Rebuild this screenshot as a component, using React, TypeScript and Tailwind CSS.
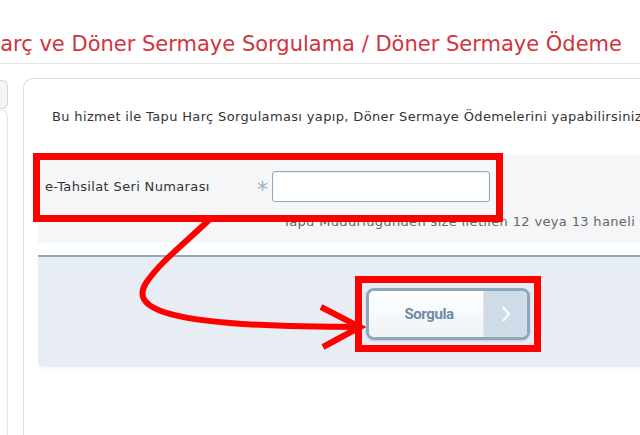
import React from "react";

const Annotations: React.FC = () => (
  <svg
    className="absolute inset-0 pointer-events-none"
    width={640}
    height={435}
    viewBox="0 0 640 435"
    fill="none"
  >
    <rect x={36.5} y={156.5} width={463} height={62} stroke="#ff0000" strokeWidth={7} />
    <rect x={358.5} y={279.5} width={179} height={69} stroke="#ff0000" strokeWidth={7} />
    <path
      d="M 210 219 C 185 243, 160 262, 146 283 C 130 308, 170 318, 230 323 C 280 327, 330 327, 360 327"
      stroke="#ff0000"
      strokeWidth={6}
      strokeLinecap="round"
    />
    <path d="M 321 307 L 360 327 L 323 347" stroke="#ff0000" strokeWidth={6} />
  </svg>
);

const App: React.FC = () => {
  return (
    <div className="relative w-[640px] h-[435px] overflow-hidden bg-white font-['DejaVu_Sans',sans-serif]">
      {/* Page title, cut off on the left */}
      <div className="h-[64px] border-b border-[#e6e6e6] flex justify-end items-start pr-[18px] pt-[31px] overflow-hidden">
        <h1 className="whitespace-nowrap text-[21px] leading-[26px] text-[#cf3440] shrink-0">
          Tapu Harç ve Döner Sermaye Sorgulama / Döner Sermaye Ödeme
        </h1>
      </div>

      <div className="flex mt-[14px]">
        {/* Left menu edge */}
        <div className="w-[8px] shrink-0 flex flex-col h-[357px]">
          <div className="h-[29px] mt-[2px] border border-l-0 border-[#d6d6d6] rounded-r-[6px] bg-[#f4f4f4]" />
          <div className="flex-1 mt-[1px] border-r border-t border-[#dfe5ea] rounded-tr-[6px]" />
        </div>

        {/* Main panel */}
        <div className="ml-[15px] flex-1 min-w-0 h-[357px] border-l border-t border-[#d3dde6] rounded-tl-[10px] overflow-hidden">
          <p className="pt-[29px] pl-[28px] text-[13px] tracking-[0.35px] leading-[17px] text-[#333] whitespace-nowrap">
            Bu hizmet ile Tapu Harç Sorgulaması yapıp, Döner Sermaye Ödemelerini yapabilirsiniz.
          </p>

          {/* Form */}
          <div className="mt-[30px] ml-[14px] h-[88px] bg-[#f5f6f7] pt-[16px] pl-[7px]">
            <div className="flex items-center h-[31px]">
              <label className="w-[208px] shrink-0 text-[13px] tracking-[0.35px] text-[#333] whitespace-nowrap">
                e-Tahsilat Seri Numarası
              </label>
              <span className="w-[19px] shrink-0 text-[22px] leading-none text-[#8fb1cb] pt-[6px] text-center">*</span>
              <input
                type="text"
                className="w-[218px] shrink-0 h-[31px] bg-white border border-[#8aaac5] rounded-[3px] shadow-[inset_0_1px_2px_rgba(0,0,0,0.08)] outline-none"
              />
            </div>
            <div className="mt-[11px] pl-[229px] flex items-center gap-[2px] text-[13px] tracking-[0.35px] leading-[17px] text-[#666] whitespace-nowrap">
              <svg width={7} height={5} viewBox="0 0 7 5" className="mb-[7px] shrink-0">
                <path d="M0.5 4.5 L3.5 1 L6.5 4.5" stroke="#c8d3dc" strokeWidth={1.2} fill="none" />
              </svg>
              <span>
                Tapu Müdürlüğünden size iletilen 12 veya 13 haneli{" "}
                <span className="text-[#e39a4a]">numarayı</span>
              </span>
            </div>
          </div>

          {/* Button bar */}
          <div className="mt-[12px] ml-[14px] h-[112px] bg-[#e7edf3] border-t-2 border-[#8eaac2] rounded-bl-[6px] pl-[328px] pt-[31px] shadow-[0_3px_4px_rgba(0,0,0,0.03)]">
            <button className="flex w-[164px] h-[52px] rounded-[8px] border-[3px] border-[#8ca7be] overflow-hidden shadow-[0_1px_2px_rgba(0,0,0,0.15)]">
              <span className="flex-1 h-full flex items-center justify-center bg-gradient-to-b from-white to-[#eef3f7] font-['Roboto',sans-serif] font-bold text-[15px] tracking-[-0.4px] text-[#6e8ba6] pl-[6px]">
                Sorgula
              </span>
              <span className="w-[44px] h-full flex items-center justify-center bg-[#cfdce7] border-l border-[#dfe8ef]">
                <svg width={10} height={18} viewBox="0 0 10 18">
                  <path d="M2 2 L8 9 L2 16" stroke="#ffffff" strokeWidth={2} fill="none" />
                </svg>
              </span>
            </button>
          </div>
        </div>
      </div>

      <Annotations />
    </div>
  );
};

export default App;
